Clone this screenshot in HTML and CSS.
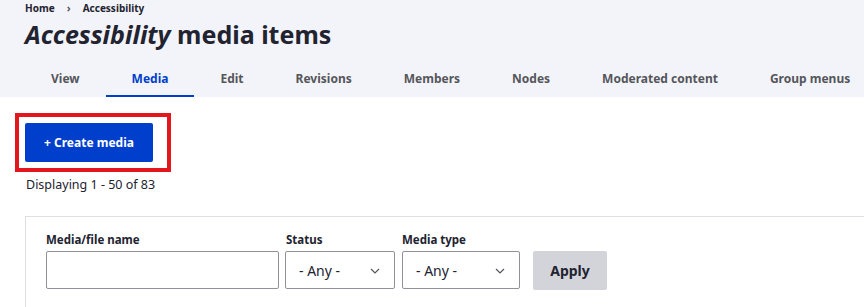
FILE: index.html
```html
<!DOCTYPE html>
<html lang="en">
<head>
<meta charset="utf-8">
<title>Accessibility media items</title>
<link rel="stylesheet" href="styles.css">
</head>
<body>
<header class="page-header">
  <nav class="breadcrumb">
    <a href="#">Home</a>
    <span class="sep">›</span>
    <a href="#">Accessibility</a>
  </nav>
  <h1 class="title"><em>Accessibility</em> media items</h1>
  <ul class="tabs">
    <li><a href="#">View</a></li>
    <li class="active"><a href="#">Media</a></li>
    <li><a href="#">Edit</a></li>
    <li><a href="#">Revisions</a></li>
    <li><a href="#">Members</a></li>
    <li><a href="#">Nodes</a></li>
    <li><a href="#">Moderated content</a></li>
    <li><a href="#">Group menus</a></li>
  </ul>
</header>
<main class="content">
  <div class="highlight">
    <a class="btn-primary" href="#">+ Create media</a>
  </div>
  <p class="summary">Displaying 1 - 50 of 83</p>
  <form class="filters">
    <div class="field">
      <label class="label">Media/file name</label>
      <input class="text-input" type="text">
    </div>
    <div class="field">
      <label class="label">Status</label>
      <div class="select status">
        <span>- Any -</span>
        <svg class="chev" width="10" height="6" viewBox="0 0 10 6"><path d="M1 1l4 4 4-4" fill="none" stroke="#55565b" stroke-width="1.2"/></svg>
      </div>
    </div>
    <div class="field">
      <label class="label">Media type</label>
      <div class="select mtype">
        <span>- Any -</span>
        <svg class="chev" width="10" height="6" viewBox="0 0 10 6"><path d="M1 1l4 4 4-4" fill="none" stroke="#55565b" stroke-width="1.2"/></svg>
      </div>
    </div>
    <div class="field action">
      <button class="btn-apply" type="button">Apply</button>
    </div>
  </form>
</main>
</body>
</html>
```

FILE: styles.css
```css
* { box-sizing: border-box; }
body {
  margin: 0;
  font-family: "Noto Sans", "Open Sans", sans-serif;
  color: #222330;
  background: #fff;
  overflow: hidden;
}
a { color: inherit; text-decoration: none; }

.page-header {
  background: #f3f4f9;
  padding: 0 0 0 25px;
}
.breadcrumb {
  display: flex;
  align-items: center;
  gap: 12px;
  padding-top: 1px;
  font-size: 10px;
  font-weight: 700;
  line-height: 14px;
  color: #222330;
}
.breadcrumb .sep { font-size: 11px; font-weight: 700; color: #55565b; }
.title {
  margin: 3px 0 0;
  font-size: 25px;
  line-height: 32px;
  font-weight: 700;
  white-space: nowrap;
}
.title em { font-style: italic; }

.tabs {
  list-style: none;
  margin: 10px 0 0;
  padding: 0;
  display: flex;
  white-space: nowrap;
}
.tabs li { flex-shrink: 0; }
.tabs li a {
  display: block;
  padding: 2px 26px 0;
  height: 37px;
  line-height: 34px;
  font-size: 12px;
  font-weight: 700;
  color: #55565b;
  border-bottom: 2px solid transparent;
}
.tabs li.active a {
  color: #003ecc;
  border-bottom-color: #003ecc;
}

.content { padding: 16px 0 0 25px; }
.highlight {
  display: inline-block;
  margin-left: -10px;
  border: 4px solid #e3161d;
  padding: 6px 14px 6px 6px;
}
.btn-primary {
  display: block;
  width: 128px;
  height: 39px;
  line-height: 39px;
  text-align: center;
  background: #003ecc;
  color: #fff;
  border-radius: 2px;
  font-size: 12px;
  font-weight: 700;
}
.summary {
  margin: 4px 0 0 1px;
  font-size: 12.5px;
  line-height: 18px;
  color: #222330;
}
.filters {
  margin-top: 22px;
  border: 1px solid #dedfe3;
  border-right: 0;
  padding: 15px 20px 20px;
  display: flex;
  align-items: flex-end;
  gap: 7px;
}
.field { display: flex; flex-direction: column; }
.label {
  font-size: 11.5px;
  font-weight: 700;
  line-height: 16px;
  margin-bottom: 3px;
  color: #222330;
}
.text-input {
  width: 233px;
  height: 38px;
  border: 1px solid #919297;
  border-radius: 2px;
  margin: 0;
  font: inherit;
}
.select {
  height: 38px;
  border: 1px solid #919297;
  border-radius: 2px;
  display: flex;
  align-items: center;
  justify-content: space-between;
  padding: 0 14px 0 13px;
  font-size: 14px;
  color: #222330;
}
.select.status { width: 110px; margin-left: -1px; }
.select.mtype { width: 118px; }
.chev { margin-top: 1px; }
.action { margin-left: 6px; }
.btn-apply {
  width: 74px;
  height: 39px;
  border: 0;
  border-radius: 2px;
  background: #d3d4d9;
  font-family: inherit;
  font-size: 14px;
  font-weight: 700;
  color: #222330;
  margin-bottom: -1px;
}
```
